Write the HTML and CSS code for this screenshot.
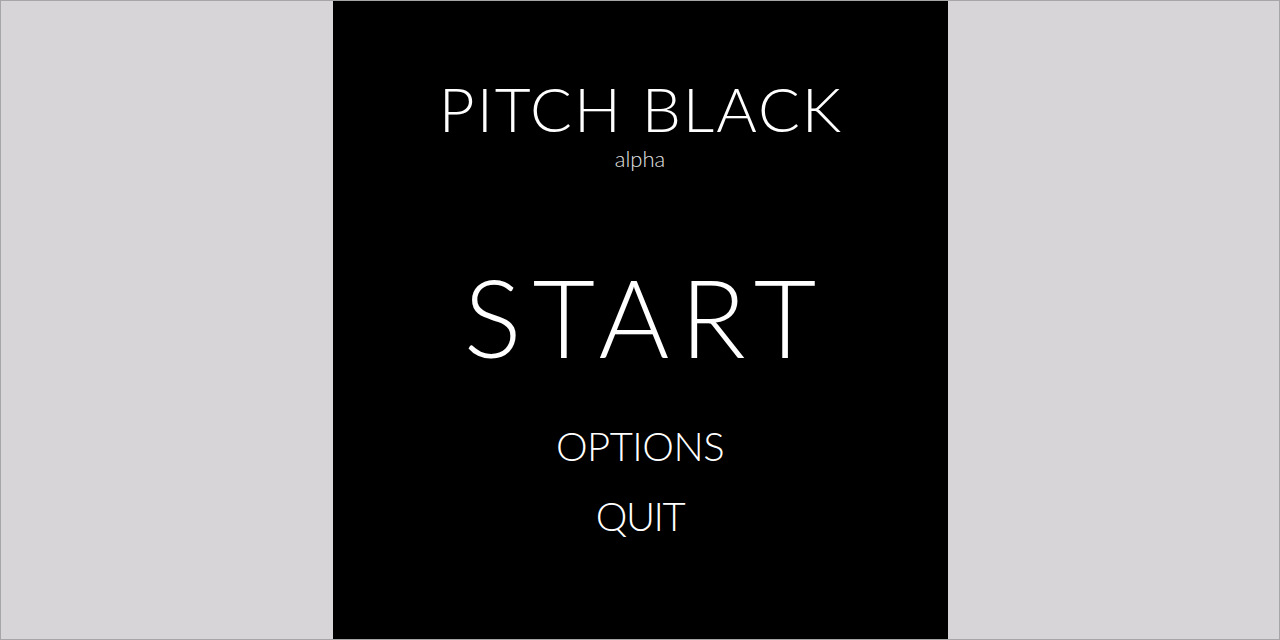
FILE: index.html
```html
<!DOCTYPE html>
<html>
<head>
<meta charset="utf-8">
<link rel="stylesheet" href="styles.css">
</head>
<body>
<div class="frame">
  <main class="panel">
    <h1 class="title">PITCH BLACK</h1>
    <div class="sub">alpha</div>
    <nav class="menu">
      <div class="item start">START</div>
      <div class="item options">OPTIONS</div>
      <div class="item quit">QUIT</div>
    </nav>
  </main>
</div>
</body>
</html>
```
FILE: styles.css
```css
html, body { margin: 0; padding: 0; }
body { font-family: Lato, "Liberation Sans", sans-serif; }
.frame {
  width: 1280px; height: 640px; box-sizing: border-box;
  border: 1px solid #a6a5a7; background: #d7d5d8;
  display: flex; justify-content: center;
}
.panel {
  width: 615px; background: #000; color: #fff;
  display: flex; flex-direction: column; align-items: center;
}
.title {
  margin: 77px -2px 0 0; font-weight: 300; font-size: 62px; line-height: 60px;
  letter-spacing: 2px;
}
.sub { font-size: 22px; font-weight: 300; line-height: 24px; margin-top: 9px; color: #e4e4e4; }
.menu { display: flex; flex-direction: column; align-items: center; }
.item { font-weight: 300; }
.start { font-size: 108px; line-height: 120px; margin: 85px -11px 0 0; letter-spacing: 11px; }
.options { font-size: 40px; line-height: 50px; margin-top: 45px; letter-spacing: -0.5px; }
.quit { font-size: 40px; line-height: 50px; margin-top: 20px; letter-spacing: -1.5px; }
```
